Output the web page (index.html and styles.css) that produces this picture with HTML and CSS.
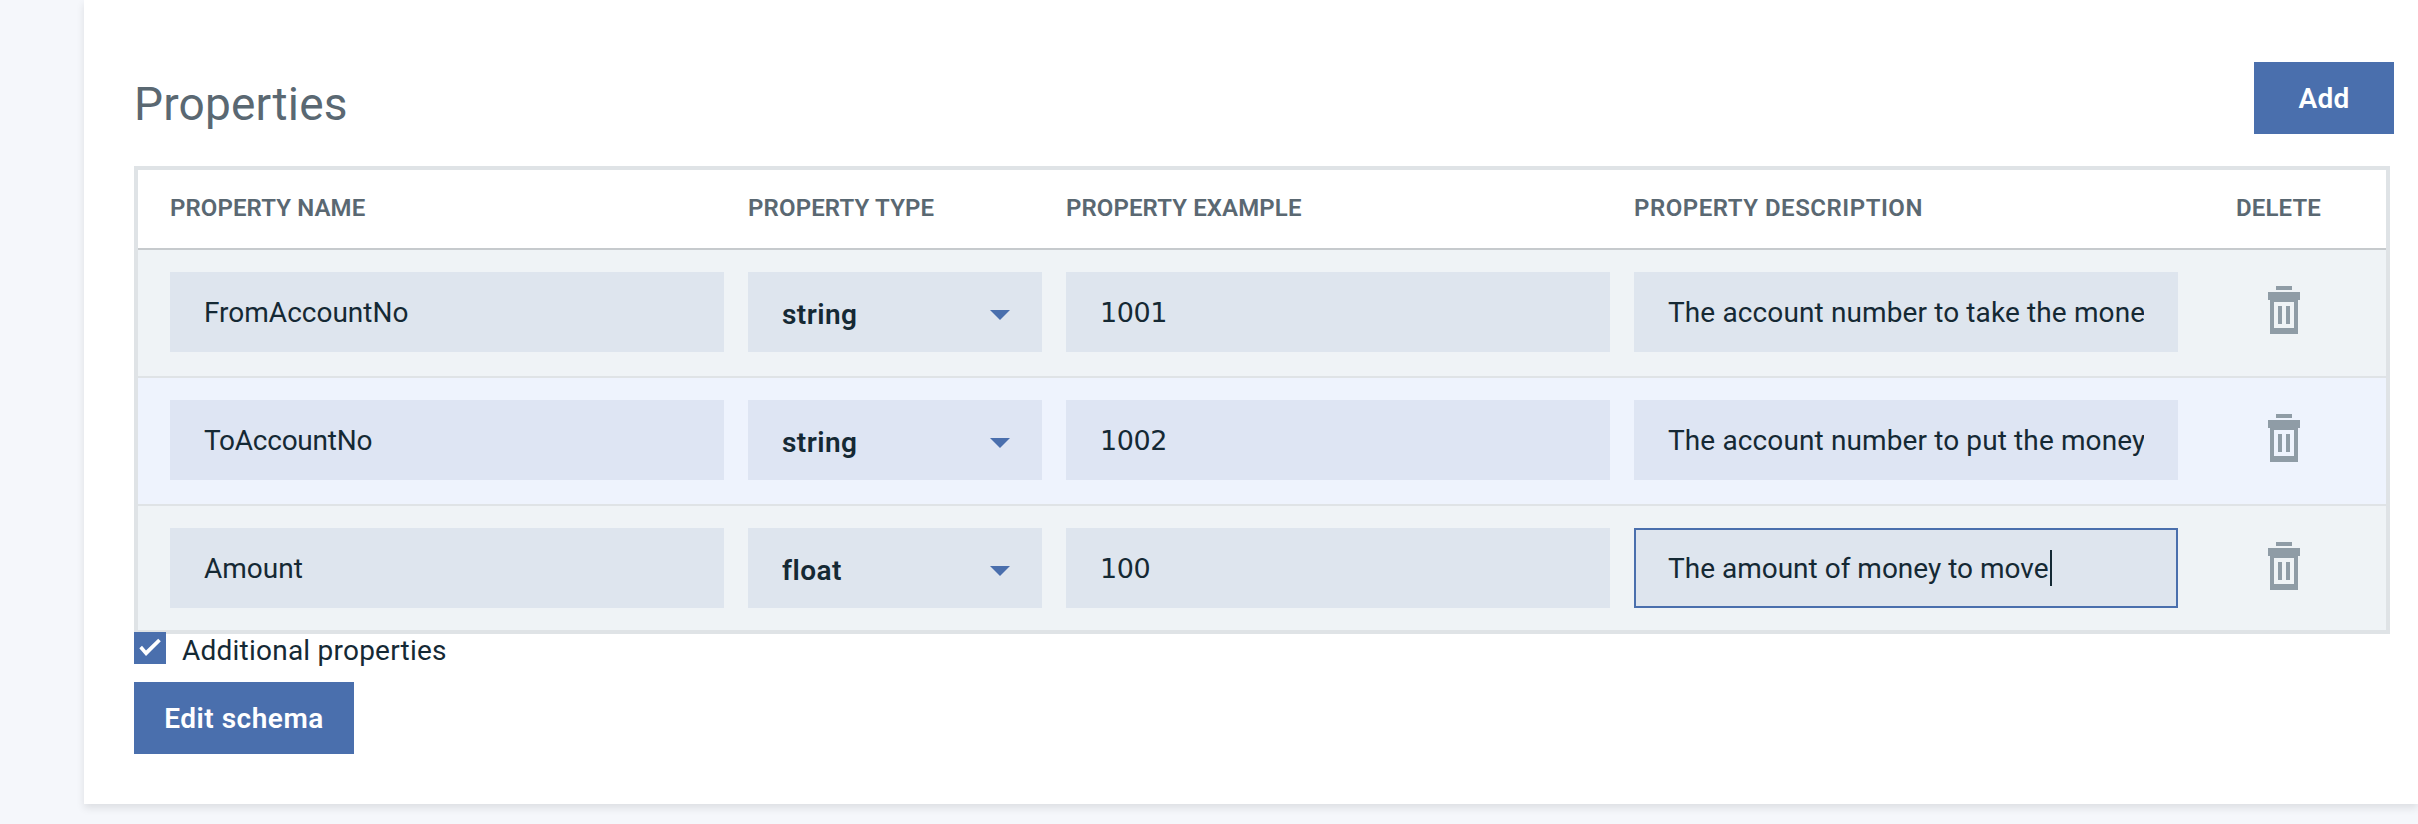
FILE: index.html
```html
<!DOCTYPE html>
<html lang="en">
<head>
<meta charset="utf-8">
<title>Properties</title>
<link rel="stylesheet" href="styles.css">
</head>
<body>
<svg class="symbols" aria-hidden="true">
  <symbol id="trash" viewBox="0 0 32 48">
    <path fill-rule="evenodd" d="M8 0h16v4H8zM0 6h32v8h-2v34H2V14H0zM6 16v26h20V16zM10 20h4v18h-4zM18 20h4v18h-4z"/>
  </symbol>
</svg>
<main class="card">
  <header class="card-header">
    <h1 class="title">Properties</h1>
    <button class="button button-add">Add</button>
  </header>
  <section class="table">
    <div class="row head">
      <span>PROPERTY NAME</span>
      <span class="head-type">PROPERTY TYPE</span>
      <span>PROPERTY EXAMPLE</span>
      <span class="head-description">PROPERTY DESCRIPTION</span>
      <span class="head-delete">DELETE</span>
    </div>
    <div class="row">
      <div class="field"><span class="value">FromAccountNo</span></div>
      <div class="field select"><span class="value">string</span><svg class="caret" viewBox="0 0 20 10"><path d="M0 0h20L10 10z"/></svg></div>
      <div class="field"><span class="value number">1001</span></div>
      <div class="field description"><span class="value">The account number to take the mone</span></div>
      <div class="delete"><svg class="trash"><use href="#trash"/></svg></div>
    </div>
    <div class="row alt">
      <div class="field tight"><span class="value">ToAccountNo</span></div>
      <div class="field select"><span class="value">string</span><svg class="caret" viewBox="0 0 20 10"><path d="M0 0h20L10 10z"/></svg></div>
      <div class="field"><span class="value number">1002</span></div>
      <div class="field description"><span class="value">The account number to put the money</span></div>
      <div class="delete"><svg class="trash"><use href="#trash"/></svg></div>
    </div>
    <div class="row">
      <div class="field"><span class="value">Amount</span></div>
      <div class="field select"><span class="value">float</span><svg class="caret" viewBox="0 0 20 10"><path d="M0 0h20L10 10z"/></svg></div>
      <div class="field"><span class="value number">100</span></div>
      <div class="field focused"><span class="value">The amount of money to move</span><i class="cursor"></i></div>
      <div class="delete"><svg class="trash"><use href="#trash"/></svg></div>
    </div>
  </section>
  <div class="option">
    <svg class="checkbox" viewBox="0 0 32 32"><path d="M5.3 16.3L8 13.7l4 4.8L24.2 6.7l2.6 2.6L12 24z"/></svg>
    <span class="option-label">Additional properties</span>
  </div>
  <button class="button button-schema">Edit schema</button>
</main>
</body>
</html>
```
FILE: styles.css
```css
* {
  box-sizing: border-box;
}

body {
  margin: 0;
  height: 824px;
  overflow: hidden;
  background: #f5f7fb;
  color: #152934;
  font-family: Roboto, sans-serif;
  font-size: 28px;
}

.symbols {
  display: none;
}

.card {
  display: flex;
  flex-direction: column;
  align-items: flex-start;
  height: 804px;
  margin-left: 84px;
  padding: 62px 24px 0 50px;
  background: #fff;
  box-shadow: 0 4px 8px rgba(0, 0, 0, 0.1);
}

.card-header {
  display: flex;
  justify-content: space-between;
  width: 100%;
  height: 104px;
}

.title {
  margin: 0;
  color: #5a6872;
  font-size: 46px;
  font-weight: 400;
  line-height: 84px;
  letter-spacing: 0.2px;
}

.button {
  height: 72px;
  padding: 0;
  border: 0;
  background: #4a6fad;
  color: #fff;
  font: 600 28px Roboto, sans-serif;
}

.button-add {
  width: 140px;
  letter-spacing: 0.3px;
}

.button-schema {
  width: 220px;
  margin-top: 18px;
  letter-spacing: 0.5px;
}

.table {
  width: 2256px;
  border: 4px solid #dfe3e6;
}

.row {
  display: grid;
  grid-template-columns: 554px 294px 544px 544px 1fr;
  column-gap: 24px;
  height: 128px;
  padding: 22px 0 0 32px;
  border-bottom: 2px solid #dfe3e6;
  background: #eff3f6;
}

.row:last-child {
  height: 124px;
  border-bottom: 0;
}

.row.alt {
  background: #eef3fd;
}

.row.head {
  height: 80px;
  padding-top: 0;
  border-bottom-color: #c6cacd;
  background: #fff;
  color: #5a6872;
  font-size: 24px;
  font-weight: 600;
  line-height: 76px;
  letter-spacing: 0.1px;
}

.head .head-type {
  letter-spacing: 0.15px;
}

.head .head-description {
  letter-spacing: 0.52px;
}

.head .head-delete {
  padding-left: 34px;
  letter-spacing: 0.12px;
}

.field {
  display: flex;
  align-items: center;
  height: 80px;
  padding: 2px 34px 0;
  background: #dee5ee;
}

.alt .field {
  background: #dee5f3;
}

.value {
  overflow: hidden;
  line-height: 40px;
  white-space: nowrap;
}

.number {
  font-family: "DejaVu Sans", sans-serif;
  font-size: 27px;
  letter-spacing: -0.4px;
}

.select {
  justify-content: space-between;
  padding: 6px 32px 0 34px;
  font-weight: 600;
  letter-spacing: 0.45px;
}

.description {
  letter-spacing: 0.12px;
}

.tight {
  letter-spacing: -0.25px;
}

.caret {
  width: 20px;
  height: 10px;
  fill: #4a6fad;
}

.focused {
  padding: 2px 32px 0;
  border: 2px solid #4a6fad;
}

.cursor {
  width: 2px;
  height: 36px;
  margin: 0 0 2px 1px;
  background: #152934;
}

.delete {
  padding: 14px 0 0 66px;
}

.trash {
  display: block;
  width: 32px;
  height: 48px;
  fill: #8f9ca6;
}

.option {
  display: flex;
  gap: 16px;
  height: 32px;
  margin-top: -2px;
}

.checkbox {
  width: 32px;
  height: 32px;
  background: #4a6fad;
  fill: #fff;
}

.option-label {
  line-height: 37px;
  letter-spacing: 0.23px;
}
```
